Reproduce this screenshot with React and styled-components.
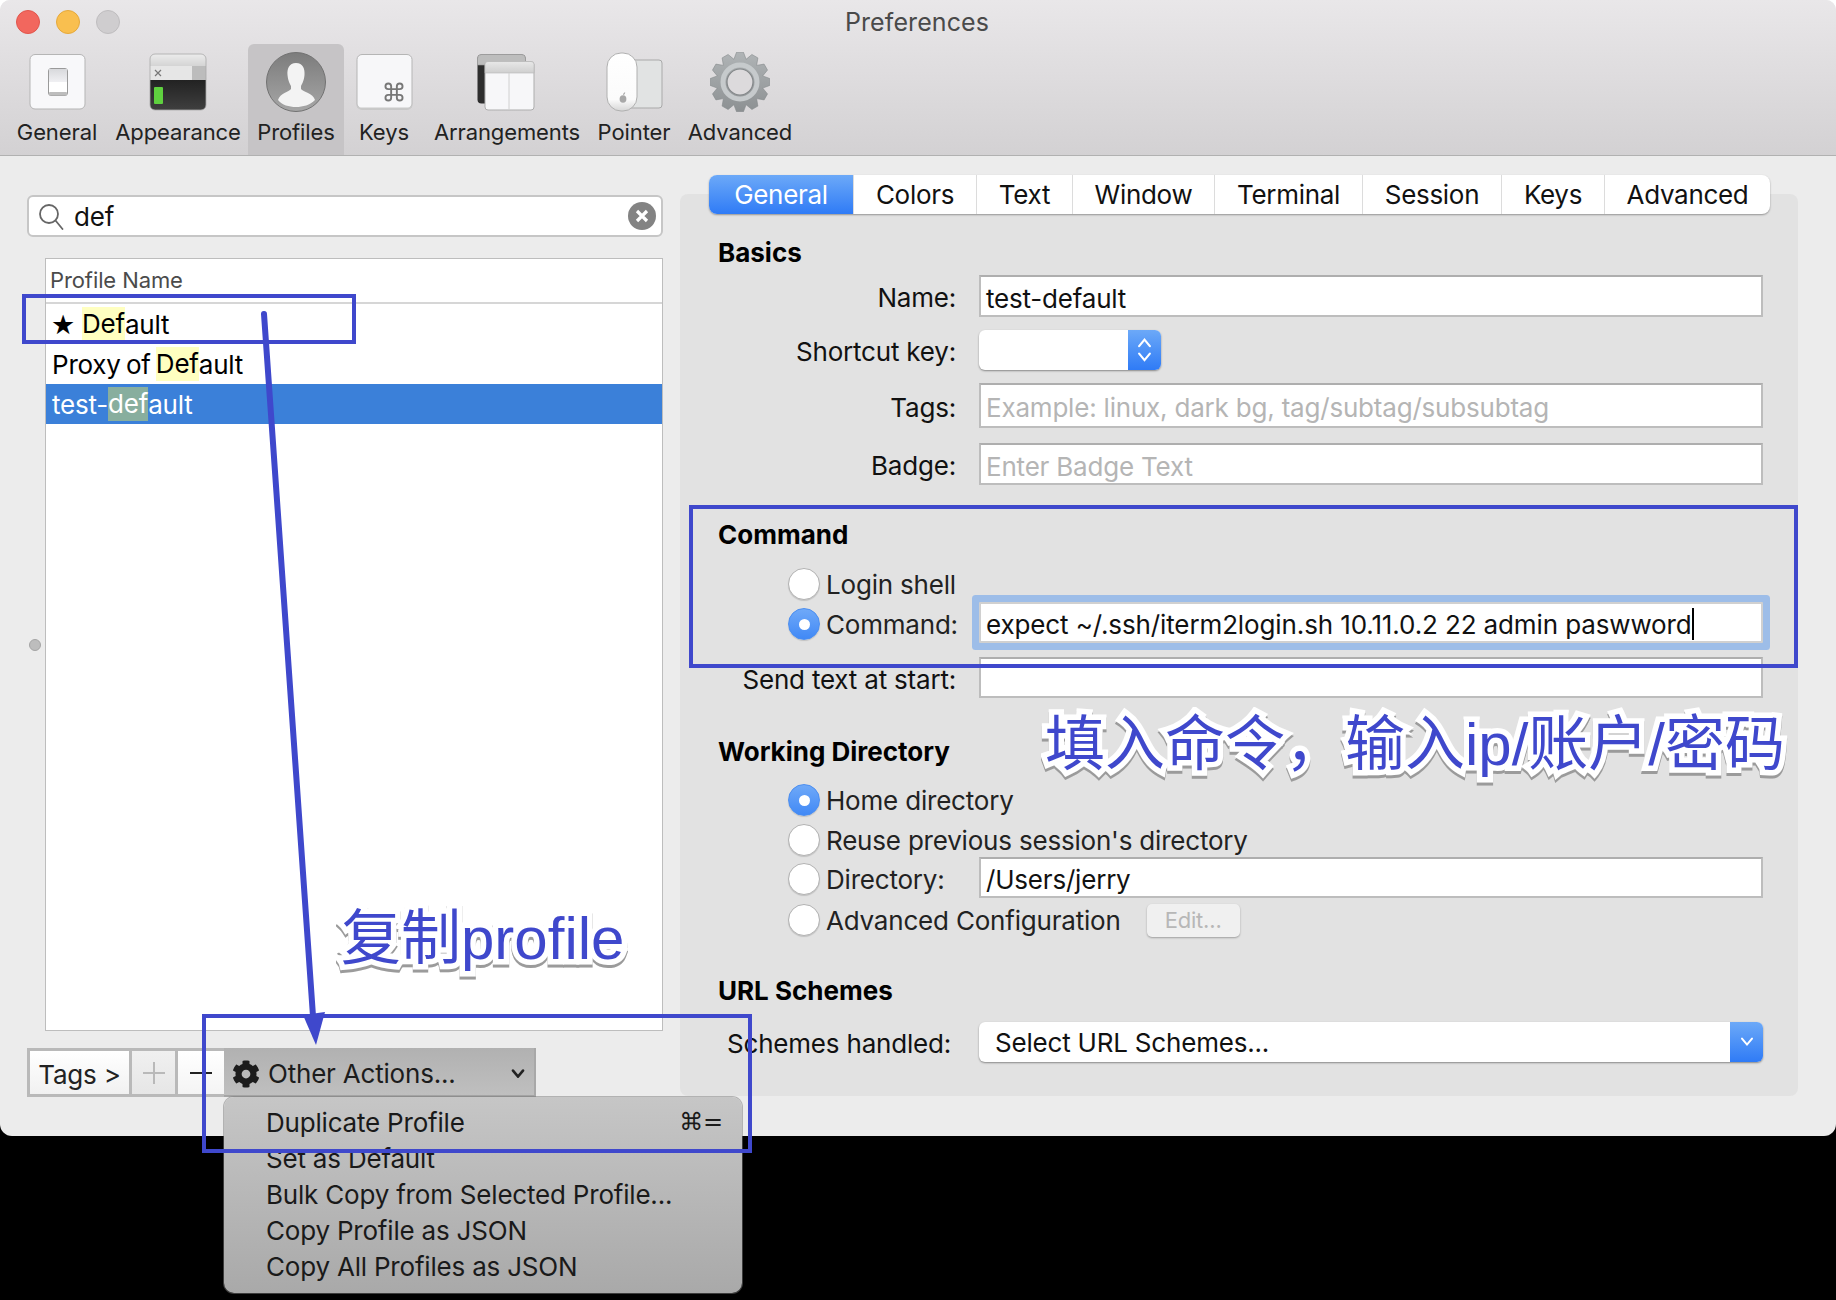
import React from 'react';
import styled, { createGlobalStyle } from 'styled-components';
import { FaCog } from 'react-icons/fa';

const sans = `Inter, "Liberation Sans", sans-serif`;
const blue = '#3f48cc';

const GlobalStyle = createGlobalStyle`
  html, body { margin: 0; padding: 0; background: #000; }
  * { box-sizing: border-box; }
  body { font-family: ${sans}; color: #111; letter-spacing: -0.2px; -webkit-font-smoothing: antialiased; }
`;

const Page = styled.div`
  position: relative;
  width: 1836px;
  height: 1300px;
  overflow: hidden;
  background: linear-gradient(#fff 0 100px, #000 100px);
`;
const Window = styled.div`
  width: 1836px;
  height: 1136px;
  display: flex;
  flex-direction: column;
  background: #ececec;
  border-radius: 10px 10px 12px 12px;
`;

/* toolbar */
const Toolbar = styled.div`
  height: 156px;
  flex: none;
  background: linear-gradient(#e9e7e9, #d3d1d3);
  border-bottom: 1px solid #b1b1b1;
  border-radius: 10px 10px 0 0;
`;
const TitleBar = styled.div`
  height: 44px;
  display: grid;
  grid-template-columns: 1fr auto 1fr;
  align-items: center;
`;
const Lights = styled.div`
  display: flex;
  gap: 16px;
  padding-left: 16px;
`;
const Light = styled.span`
  width: 24px;
  height: 24px;
  border-radius: 50%;
  background: ${p => p.$color};
  border: 1px solid ${p => p.$edge};
`;
const Title = styled.div`
  font-size: 25px;
  letter-spacing: 0.1px;
  margin-left: -2px;
  color: #4a4a4a;
`;
const ToolItems = styled.div`
  display: flex;
  padding-left: 6px;
  height: 111px;
`;
const ToolItem = styled.div`
  width: ${p => p.$w}px;
  display: flex;
  flex-direction: column;
  align-items: center;
  padding-top: 8px;
  border-radius: 6px 6px 0 0;
  background: ${p => (p.$active ? '#c6c4c6' : 'transparent')};
  svg { display: block; }
`;
const ToolLabel = styled.div`
  font-size: 22px;
  line-height: 30px;
  margin-top: 5px;
  letter-spacing: -0.1px;
  color: #222;
  white-space: nowrap;
`;

/* main area */
const Main = styled.div`
  flex: 1;
  display: flex;
`;
const LeftColumn = styled.div`
  width: 680px;
  flex: none;
  padding: 39px 17px 0 27px;
`;
const SearchField = styled.div`
  height: 42px;
  display: flex;
  align-items: center;
  padding: 0 5px 0 9px;
  background: #fff;
  border: 2px solid #c6c6c6;
  border-radius: 6px;
  font-size: 26px;
`;
const SearchText = styled.span`
  margin-left: 9px;
  flex: 1;
`;
const ClearBtn = styled.span`
  width: 28px;
  height: 28px;
  border-radius: 50%;
  background: #838383;
  display: flex;
  align-items: center;
  justify-content: center;
`;
const TableWrap = styled.div`
  position: relative;
  margin: 21px 0 0 18px;
`;
const SplitDot = styled.span`
  position: absolute;
  left: -16px;
  top: 381px;
  width: 12px;
  height: 12px;
  border-radius: 50%;
  background: #bdbdbd;
  border: 1px solid #a5a5a5;
`;
const Table = styled.div`
  height: 773px;
  background: #fff;
  border: 1px solid #bdbdbd;
`;
const TableHead = styled.div`
  height: 45px;
  padding: 5px 0 0 4px;
  font-size: 22px;
  line-height: 32px;
  letter-spacing: -0.1px;
  color: #4b4b4b;
  border-bottom: 2px solid #d6d6d6;
`;
const ProfileRow = styled.div`
  height: 40px;
  display: flex;
  align-items: center;
  padding-left: 6px;
  font-size: 26px;
  white-space: pre;
  word-spacing: -2px;
  color: ${p => (p.$selected ? '#fff' : '#000')};
  background: ${p => (p.$selected ? '#3b80d9' : 'transparent')};
`;
const Star = styled.span`
  font-family: "DejaVu Sans", sans-serif;
  font-size: 27px;
  width: 31px;
  margin-left: -1px;
`;
const Match = styled.span`
  display: inline-block;
  height: 34px;
  line-height: 34px;
  background: ${p => (p.$selected ? '#88ae9e' : '#ffffc0')};
`;
const BottomBar = styled.div`
  position: relative;
  display: flex;
  height: 49px;
  margin-top: 17px;
`;
const BarButton = styled.div`
  width: ${p => p.$w}px;
  display: flex;
  align-items: center;
  justify-content: center;
  padding-top: 3px;
  font-size: 26px;
  color: #222;
  background: linear-gradient(#fff, #f1f1f1);
  border: 3px solid #b9b9b9;
  border-left-width: ${p => (p.$joined ? 0 : 3)}px;
  border-right-width: ${p => (p.$last ? 0 : 3)}px;
`;
const PlainBarButton = styled(BarButton)`
  padding-top: 0;
  background: ${p => (p.$dim ? 'linear-gradient(#f0f0f0, #e6e6e6)' : 'linear-gradient(#fff, #f4f4f4)')};
`;
const ActionsButton = styled.div`
  width: 312px;
  display: flex;
  align-items: center;
  padding: 4px 9px 0 8px;
  font-size: 26px;
  color: #1c1c1c;
  background: linear-gradient(#b1b1b1, #bfbfbf);
  border-bottom: 2px solid #a4a4a4;
  border-right: 2px solid #a8a8a8;
  gap: 8px;
`;
const ActionsText = styled.span`
  flex: 1;
`;
const Menu = styled.div`
  position: absolute;
  left: 197px;
  top: 49px;
  width: 518px;
  height: 196px;
  padding: 7px 0 0;
  border-radius: 10px;
  background: linear-gradient(#c6c6c6, #a9a9a9);
  box-shadow: 0 0 0 1px rgba(120, 120, 120, 0.5);
`;
const MenuItem = styled.div`
  height: 36px;
  display: flex;
  justify-content: space-between;
  align-items: center;
  padding: 0 19px 0 42px;
  font-size: 26px;
  color: #1a1a1a;
`;
const Shortcut = styled.span`
  font-family: "DejaVu Sans", sans-serif;
  font-size: 24px;
`;

/* preferences panel */
const RightColumn = styled.div`
  width: 1118px;
  flex: none;
  padding-top: 19px;
`;
const Tabs = styled.div`
  position: relative;
  display: flex;
  width: 1061px;
  height: 39px;
  margin-left: 29px;
  background: #fff;
  border-radius: 8px;
  box-shadow: 0 1px 2px rgba(0, 0, 0, 0.35);
  overflow: hidden;
`;
const Tab = styled.div`
  width: ${p => p.$w}px;
  display: flex;
  align-items: center;
  justify-content: center;
  font-size: 26px;
  letter-spacing: -0.3px;
  border-left: ${p => (p.$first ? 'none' : '1px solid #dcdcdc')};
  color: ${p => (p.$active ? '#fff' : '#111')};
  background: ${p => (p.$active ? 'linear-gradient(#6ca9f8, #2f7bf6)' : 'transparent')};
`;
const Panel = styled.div`
  height: 902px;
  margin-top: -20px;
  padding: 44px 35px 0 39px;
  background: #e2e2e2;
  border-radius: 8px;
`;
const Heading = styled.div`
  height: 30px;
  line-height: 30px;
  margin-top: ${p => p.$top || 0}px;
  margin-left: -1px;
  font-size: 26px;
  font-weight: 700;
  letter-spacing: 0;
  color: #000;
`;
const Row = styled.div`
  display: grid;
  grid-template-columns: 237px 784px;
  column-gap: 23px;
  align-items: center;
  height: ${p => p.$h}px;
  margin-top: ${p => p.$top}px;
`;
const Label = styled.div`
  text-align: right;
  font-size: 26px;
  color: #111;
  white-space: nowrap;
  padding-top: 3px;
  padding-right: ${p => p.$inset || 0}px;
`;
const Field = styled.div`
  height: ${p => p.$h}px;
  display: flex;
  align-items: center;
  padding: 4px 5px 0;
  background: #fff;
  border: 2px solid #bdbdbd;
  border-top-color: #aeaeae;
  font-size: 26px;
  white-space: nowrap;
  color: ${p => (p.$hint ? '#b5b5b5' : '#111')};
`;
const FocusField = styled(Field)`
  padding-top: 3px;
  letter-spacing: -0.12px;
  border-color: #d0d0d0;
  box-shadow: 0 0 0 7px #9dbde8;
  border-radius: 1px;
`;
const Caret = styled.span`
  width: 2px;
  height: 32px;
  background: #000;
`;
const Stepper = styled.div`
  width: 182px;
  height: 40px;
  display: flex;
  justify-content: flex-end;
  background: #fff;
  border-radius: 6px;
  overflow: hidden;
  box-shadow: 0 1px 2px rgba(0, 0, 0, 0.4);
`;
const BlueCap = styled.div`
  width: ${p => p.$w}px;
  height: 100%;
  display: flex;
  align-items: center;
  justify-content: center;
  background: linear-gradient(#6ca9f8, #2f7bf6);
`;
const SelectBox = styled(Stepper)`
  width: 784px;
  justify-content: space-between;
  align-items: center;
  padding-left: 16px;
  font-size: 26px;
  color: #111;
`;
const RadioLine = styled.div`
  display: flex;
  align-items: center;
  gap: 6px;
  height: ${p => p.$h}px;
  margin-top: ${p => p.$top || 0}px;
  padding-left: 69px;
  font-size: 26px;
  color: #222;
  white-space: nowrap;
`;
const RadioCell = styled(RadioLine)`
  height: 32px;
  margin-top: 3px;
`;
const Radio = styled.span`
  flex: none;
  width: 32px;
  height: 32px;
  border-radius: 50%;
  display: flex;
  align-items: center;
  justify-content: center;
  background: ${p => (p.$on ? 'linear-gradient(#6fa9f8, #4189f6)' : '#fff')};
  border: 1px solid ${p => (p.$on ? '#4b8ef0' : '#b2b2b2')};
  box-shadow: 0 1px 1px rgba(0, 0, 0, 0.15);
  &::after {
    content: '';
    display: ${p => (p.$on ? 'block' : 'none')};
    width: 11px;
    height: 11px;
    border-radius: 50%;
    background: #fff;
  }
`;
const EditButton = styled.span`
  margin-left: 20px;
  width: 93px;
  height: 33px;
  display: flex;
  align-items: center;
  justify-content: center;
  font-size: 22px;
  color: #b7b7b7;
  background: #f0f0f0;
  border-radius: 5px;
  box-shadow: 0 1px 2px rgba(0, 0, 0, 0.3);
`;

/* annotations drawn on top of the screenshot */
const Mark = styled.div`
  position: absolute;
  border: 4px solid ${blue};
  pointer-events: none;
`;
const DefaultMark = styled(Mark)`
  left: 22px;
  top: 294px;
  width: 334px;
  height: 50px;
`;
const CommandMark = styled(Mark)`
  left: 689px;
  top: 505px;
  width: 1109px;
  height: 163px;
`;
const ActionsMark = styled(Mark)`
  left: 202px;
  top: 1014px;
  width: 550px;
  height: 139px;
`;
const ArrowSvg = styled.svg`
  position: absolute;
  left: 0;
  top: 0;
  pointer-events: none;
`;
const Note = styled.div`
  position: absolute;
  left: ${p => p.$x}px;
  top: ${p => p.$y}px;
  font-family: "Liberation Sans", "Noto Sans CJK SC", sans-serif;
  font-size: 60px;
  line-height: 72px;
  letter-spacing: 0;
  white-space: pre;
  color: ${blue};
  -webkit-text-stroke: 11px #fff;
  paint-order: stroke fill;
  filter: drop-shadow(0 3px 0 #9b9b9b);
`;

/* toolbar pictures */
const gearPath = (() => {
  const teeth = 12;
  const pts = [];
  for (let i = 0; i < teeth; i++) {
    const a = (i / teeth) * Math.PI * 2;
    const step = (Math.PI * 2) / teeth;
    [
      [23.5, -0.5],
      [30, -0.22],
      [30, 0.22],
      [23.5, 0.5],
    ].forEach(([r, k]) => {
      const t = a + k * step;
      pts.push(`${(30 + r * Math.sin(t)).toFixed(2)} ${(30 - r * Math.cos(t)).toFixed(2)}`);
    });
  }
  return `M${pts.join('L')}Z`;
})();

const GeneralIcon = () => (
  <svg width="60" height="60" viewBox="0 0 60 60">
    <defs>
      <linearGradient id="swTop" x1="0" y1="0" x2="0" y2="1">
        <stop offset="0" stopColor="#d8d9dc" />
        <stop offset="1" stopColor="#f0f0f3" />
      </linearGradient>
    </defs>
    <rect x="3" y="2.5" width="55" height="54.5" rx="5" fill="#f8f8fa" stroke="#b5b5b5" />
    <rect x="21.5" y="16.5" width="19" height="27" rx="2.5" fill="#fff" stroke="#9a9a9a" />
    <rect x="22" y="17" width="18" height="13" fill="url(#swTop)" />
    <rect x="22" y="40" width="18" height="3.5" rx="1" fill="#bdbdbd" />
  </svg>
);
const AppearanceIcon = () => (
  <svg width="60" height="60" viewBox="0 0 60 60">
    <defs>
      <linearGradient id="apBar" x1="0" y1="0" x2="0" y2="1">
        <stop offset="0" stopColor="#ececec" />
        <stop offset="1" stopColor="#d4d4d4" />
      </linearGradient>
      <linearGradient id="apDark" x1="0" y1="0" x2="0" y2="1">
        <stop offset="0" stopColor="#222" />
        <stop offset="1" stopColor="#3f3f3f" />
      </linearGradient>
      <clipPath id="apClip">
        <rect x="2" y="2" width="56" height="56" rx="5" />
      </clipPath>
    </defs>
    <g clipPath="url(#apClip)">
      <rect x="2" y="2" width="56" height="12" fill="url(#apBar)" />
      <rect x="2" y="14" width="42" height="14" fill="#e6e6e6" />
      <rect x="44" y="14" width="14" height="14" fill="#bcbcbc" />
      <rect x="2" y="28" width="56" height="30" fill="url(#apDark)" />
      <path d="M7 18l6 6M13 18l-6 6" stroke="#777" strokeWidth="1.2" />
      <rect x="6" y="35" width="9" height="17" rx="1" fill="#5fd13f" />
    </g>
    <rect x="2" y="2" width="56" height="56" rx="5" fill="none" stroke="#a8a8a8" strokeWidth="0.8" />
  </svg>
);
const ProfileIcon = () => (
  <svg width="60" height="60" viewBox="0 0 60 60">
    <defs>
      <linearGradient id="prDisc" x1="0" y1="0" x2="0" y2="1">
        <stop offset="0" stopColor="#7c7c7c" />
        <stop offset="1" stopColor="#a6a6a6" />
      </linearGradient>
    </defs>
    <circle cx="30" cy="30" r="29.5" fill="url(#prDisc)" stroke="#727272" />
    <path
      d="M30 11C37 11 39 17 38.5 23C38 29 36 32 35 34L35 37C37 40 47 41 49 48C44 53 37 55 30 55C23 55 16 53 12 48C14 41 23 40 25 37L25 34C24 32 22 29 21.5 23C21 17 23 11 30 11Z"
      fill="#f3f3f3"
    />
  </svg>
);
const KeysIcon = () => (
  <svg width="60" height="60" viewBox="0 0 60 60">
    <rect x="3" y="2.5" width="55" height="54.5" rx="5" fill="#f7f7f9" stroke="#b5b5b5" />
    <path d="M3.5 54a4 4 0 0 0 4 2.5h46a4 4 0 0 0 4-2.5" fill="none" stroke="#c9c9c9" strokeWidth="2" />
    <g transform="translate(28.6 28.6) scale(0.95)" fill="none" stroke="#777" strokeWidth="2">
      <path d="M15 6v12a3 3 0 1 0 3-3H6a3 3 0 1 0 3 3V6a3 3 0 1 0-3 3h12a3 3 0 1 0-3-3" />
    </g>
  </svg>
);
const ArrangementsIcon = () => (
  <svg width="60" height="60" viewBox="0 0 60 60">
    <defs>
      <linearGradient id="arBar" x1="0" y1="0" x2="0" y2="1">
        <stop offset="0" stopColor="#e8e8e8" />
        <stop offset="1" stopColor="#cfcfcf" />
      </linearGradient>
    </defs>
    <rect x="0.5" y="2.5" width="48" height="49" rx="4" fill="#2e2e2e" />
    <path d="M0.5 13V6.5a4 4 0 0 1 4-4h40a4 4 0 0 1 4 4V13Z" fill="#bdbdbd" stroke="#999" strokeWidth="0.6" />
    <rect x="8" y="9.5" width="49" height="48.5" rx="3" fill="#f7f7f9" stroke="#adadad" />
    <path d="M8 21V12.5a3 3 0 0 1 3-3h43a3 3 0 0 1 3 3V21Z" fill="url(#arBar)" stroke="#b5b5b5" strokeWidth="0.6" />
    <path d="M32 21V58" stroke="#d0d0d0" />
  </svg>
);
const PointerIcon = () => (
  <svg width="60" height="60" viewBox="0 0 60 60">
    <defs>
      <linearGradient id="ptMouse" x1="0" y1="0" x2="0" y2="1">
        <stop offset="0" stopColor="#fff" />
        <stop offset="0.8" stopColor="#fbfbfb" />
        <stop offset="1" stopColor="#d6d6d6" />
      </linearGradient>
    </defs>
    <rect x="20" y="8" width="38" height="48" rx="3" fill="#e1e3e3" stroke="#a9a9a9" />
    <rect x="3" y="1" width="30" height="58" rx="14" fill="url(#ptMouse)" stroke="#b0b0b0" />
    <ellipse cx="19" cy="47" rx="3.4" ry="3.8" fill="#a8a8a8" />
    <path d="M19 43c0-1.5 1-2.6 2.2-2.8C21.2 41.6 20.300 43 19 43Z" fill="#a8a8a8" />
  </svg>
);
const GearIcon = () => (
  <svg width="60" height="60" viewBox="0 0 60 60">
    <defs>
      <linearGradient id="grBody" x1="0" y1="0" x2="0" y2="1">
        <stop offset="0" stopColor="#b0b4b6" />
        <stop offset="1" stopColor="#8c9092" />
      </linearGradient>
    </defs>
    <path d={gearPath} fill="url(#grBody)" stroke="#85898b" strokeWidth="0.6" />
    <circle cx="30" cy="30" r="17" fill="none" stroke="#c6cacc" strokeWidth="5" />
    <circle cx="30" cy="30" r="13" fill="#dcdadc" stroke="#84888a" strokeWidth="1.2" />
  </svg>
);

const tools = [
  { label: 'General', w: 102, Icon: GeneralIcon },
  { label: 'Appearance', w: 140, Icon: AppearanceIcon },
  { label: 'Profiles', w: 96, Icon: ProfileIcon, active: true },
  { label: 'Keys', w: 80, Icon: KeysIcon },
  { label: 'Arrangements', w: 166, Icon: ArrangementsIcon },
  { label: 'Pointer', w: 88, Icon: PointerIcon },
  { label: 'Advanced', w: 124, Icon: GearIcon },
];

const tabs = [
  ['General', 144],
  ['Colors', 123],
  ['Text', 96],
  ['Window', 142],
  ['Terminal', 148],
  ['Session', 139],
  ['Keys', 103],
  ['Advanced', 166],
];

const menuItems = ['Duplicate Profile', 'Set as Default', 'Bulk Copy from Selected Profile...', 'Copy Profile as JSON', 'Copy All Profiles as JSON'];

const Chevron = ({ up, color = '#fff', size = 14, weight = 2 }) => (
  <svg width={size} height={size * 0.65} viewBox="0 0 14 9" fill="none" stroke={color} strokeWidth={weight} strokeLinecap="round">
    <path d={up ? 'M2 7.500L7 1.500L12 7.500' : 'M2 1.500L7 7.500L12 1.500'} />
  </svg>
);

const StepIcons = styled.div`
  display: flex;
  flex-direction: column;
  gap: 4px;
`;

export default function App() {
  return (
    <Page>
      <GlobalStyle />
      <Window>
        <Toolbar>
          <TitleBar>
            <Lights>
              <Light $color="#f2675e" $edge="#e2554c" />
              <Light $color="#f9bf4f" $edge="#e6a93b" />
              <Light $color="#cfcdcf" $edge="#bfbdbf" />
            </Lights>
            <Title>Preferences</Title>
          </TitleBar>
          <ToolItems>
            {tools.map(({ label, w, Icon, active }) => (
              <ToolItem key={label} $w={w} $active={active}>
                <Icon />
                <ToolLabel>{label}</ToolLabel>
              </ToolItem>
            ))}
          </ToolItems>
        </Toolbar>

        <Main>
          <LeftColumn>
            <SearchField>
              <svg width="27" height="27" viewBox="0 0 27 27" fill="none" stroke="#666" strokeWidth="1.8">
                <circle cx="11" cy="11" r="9" />
                <path d="M17.500 17.500l7 8.500" strokeLinecap="round" />
              </svg>
              <SearchText>def</SearchText>
              <ClearBtn>
                <svg width="14" height="14" viewBox="0 0 14 14" stroke="#fff" strokeWidth="3.200">
                  <path d="M2 2l10 10M12 2L2 12" />
                </svg>
              </ClearBtn>
            </SearchField>

            <TableWrap>
              <SplitDot />
              <Table>
                <TableHead>Profile Name</TableHead>
                <ProfileRow>
                  <Star>★</Star>
                  <Match>Def</Match>ault
                </ProfileRow>
                <ProfileRow>
                  Proxy of <Match>Def</Match>ault
                </ProfileRow>
                <ProfileRow $selected>
                  test-<Match $selected>def</Match>ault
                </ProfileRow>
              </Table>
            </TableWrap>

            <BottomBar>
              <BarButton $w={105}>Tags &gt;</BarButton>
              <PlainBarButton $w={46} $joined $dim>
                <svg width="22" height="22" viewBox="0 0 22 22" stroke="#b9b9b9" strokeWidth="2">
                  <path d="M11 0v22M0 11h22" />
                </svg>
              </PlainBarButton>
              <PlainBarButton $w={46} $joined $last>
                <svg width="22" height="4" viewBox="0 0 22 4" stroke="#222" strokeWidth="2">
                  <path d="M0 2h22" />
                </svg>
              </PlainBarButton>
              <ActionsButton>
                <FaCog size={28} color="#1c1c1c" />
                <ActionsText>Other Actions...</ActionsText>
                <Chevron color="#222" size={14} weight={2.6} />
              </ActionsButton>
              <Menu>
                {menuItems.map((item, i) => (
                  <MenuItem key={item}>
                    {item}
                    {i === 0 && <Shortcut>⌘=</Shortcut>}
                  </MenuItem>
                ))}
              </Menu>
            </BottomBar>
          </LeftColumn>

          <RightColumn>
            <Tabs>
              {tabs.map(([label, w], i) => (
                <Tab key={label} $w={w} $first={i === 0} $active={i === 0}>
                  {label}
                </Tab>
              ))}
            </Tabs>
            <Panel>
              <Heading>Basics</Heading>
              <Row $h={42} $top={7}>
                <Label>Name:</Label>
                <Field $h={42}>test-default</Field>
              </Row>
              <Row $h={40} $top={13}>
                <Label>Shortcut key:</Label>
                <Stepper>
                  <BlueCap $w={33}>
                    <StepIcons>
                      <Chevron up size={15} />
                      <Chevron size={15} />
                    </StepIcons>
                  </BlueCap>
                </Stepper>
              </Row>
              <Row $h={45} $top={13}>
                <Label>Tags:</Label>
                <Field $h={45} $hint>Example: linux, dark bg, tag/subtag/subsubtag</Field>
              </Row>
              <Row $h={42} $top={15}>
                <Label>Badge:</Label>
                <Field $h={42} $hint>Enter Badge Text</Field>
              </Row>

              <Heading $top={35}>Command</Heading>
              <RadioLine $h={32} $top={18}>
                <Radio />
                Login shell
              </RadioLine>
              <Row $h={41} $top={2}>
                <RadioCell>
                  <Radio $on />
                  Command:
                </RadioCell>
                <FocusField $h={41}>
                  expect ~/.ssh/iterm2login.sh 10.11.0.2 22 admin paswword
                  <Caret />
                </FocusField>
              </Row>
              <Row $h={41} $top={14}>
                <Label>Send text at start:</Label>
                <Field $h={41} />
              </Row>

              <Heading $top={39}>Working Directory</Heading>
              <RadioLine $h={32} $top={17}>
                <Radio $on />
                Home directory
              </RadioLine>
              <RadioLine $h={32} $top={8}>
                <Radio />
                Reuse previous session's directory
              </RadioLine>
              <Row $h={41} $top={1}>
                <RadioCell>
                  <Radio />
                  Directory:
                </RadioCell>
                <Field $h={41}>/Users/jerry</Field>
              </Row>
              <RadioLine $h={32} $top={6}>
                <Radio />
                Advanced Configuration
                <EditButton>Edit...</EditButton>
              </RadioLine>

              <Heading $top={40}>URL Schemes</Heading>
              <Row $h={40} $top={16}>
                <Label $inset={5}>Schemes handled:</Label>
                <SelectBox>
                  Select URL Schemes...
                  <BlueCap $w={33}>
                    <Chevron size={14} />
                  </BlueCap>
                </SelectBox>
              </Row>
            </Panel>
          </RightColumn>
        </Main>
      </Window>

      <DefaultMark />
      <CommandMark />
      <ActionsMark />
      <ArrowSvg width="1836" height="1300" viewBox="0 0 1836 1300">
        <path d="M264 314L313 1016" stroke={blue} strokeWidth="6" strokeLinecap="round" />
        <path d="M303 1015L325 1012L316 1045Z" fill={blue} />
      </ArrowSvg>
      <Note $x={341} $y={903}>复制profile</Note>
      <Note $x={1045} $y={709}>填入命令，输入ip/账户/密码</Note>
    </Page>
  );
}
